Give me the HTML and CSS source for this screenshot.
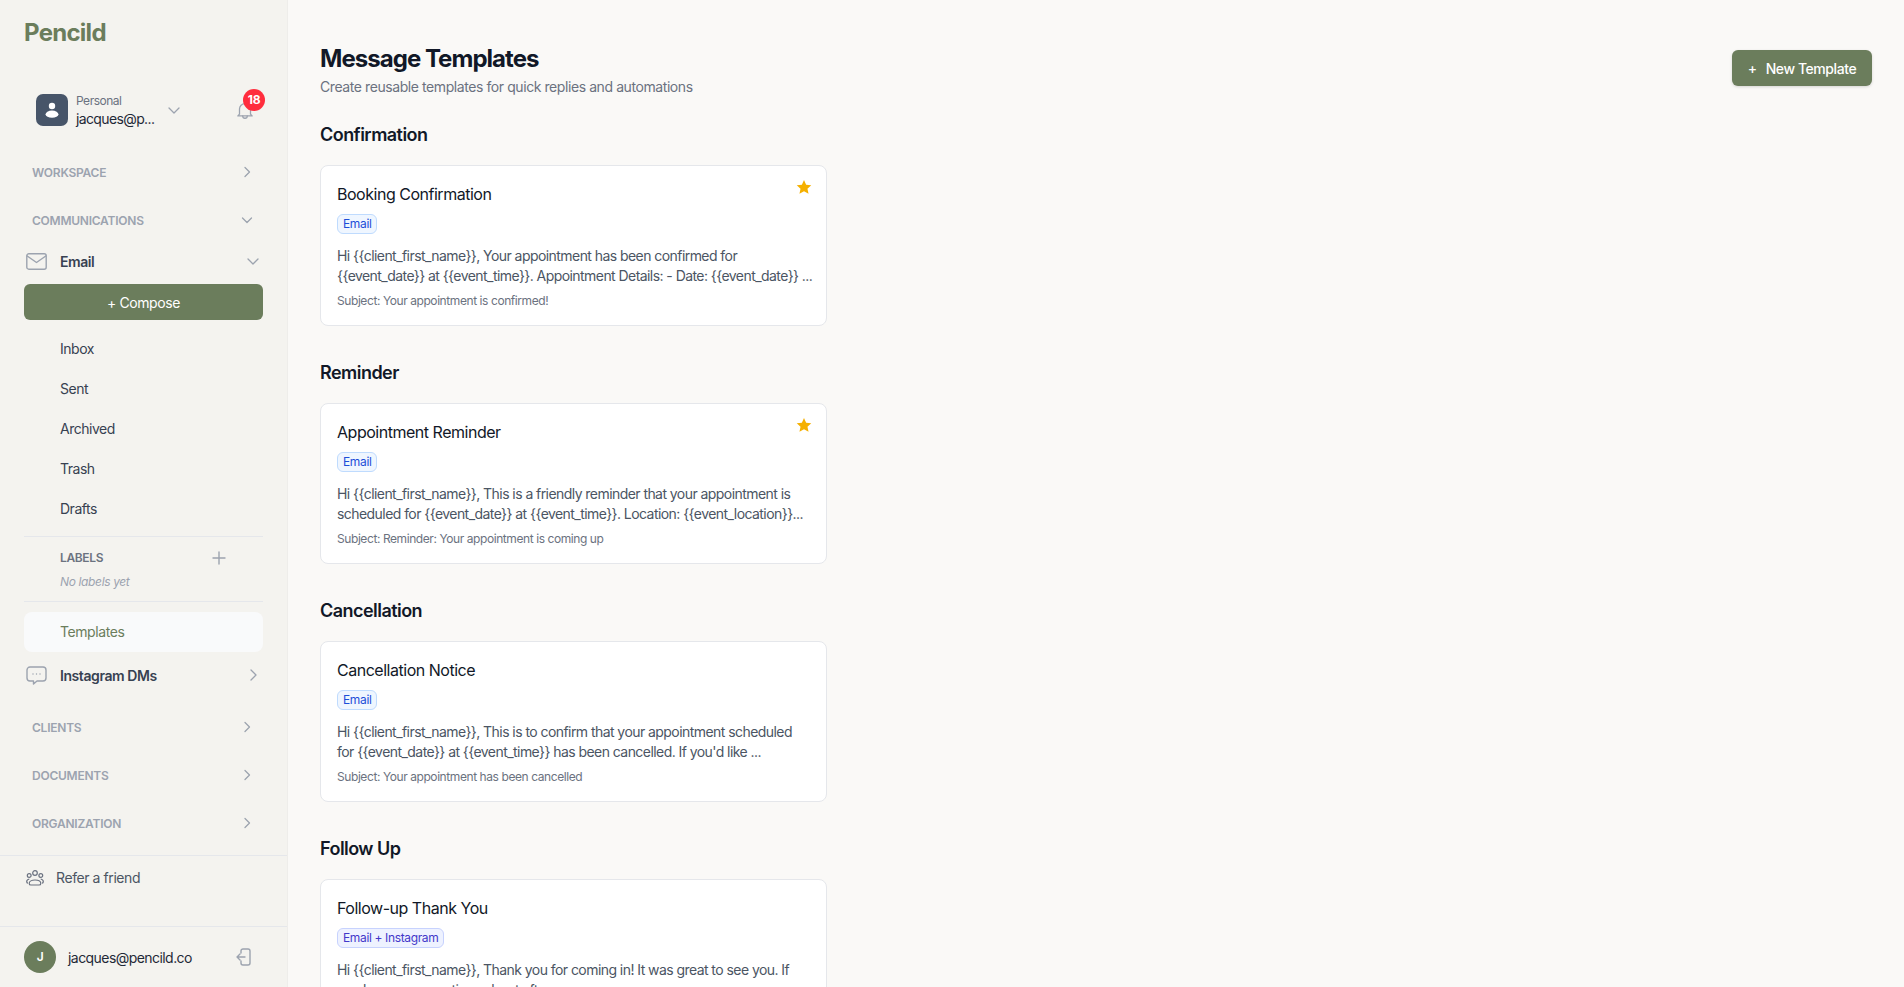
FILE: index.html
```html
<!DOCTYPE html>
<html lang="en">
<head>
    <meta charset="UTF-8">
    <meta name="viewport" content="width=device-width, initial-scale=1.0">
    <title>Message Templates - Pencild</title>
    <link rel="stylesheet" href="styles.css">
</head>
<body>
<div class="app">
    <aside class="sidebar">
        <div class="logo">Pencild</div>

        <div class="account">
            <div class="account-pic">
                <svg width="18" height="18" viewBox="0 0 18 18" fill="#fff"><circle cx="9" cy="5" r="3.2"/><ellipse cx="9" cy="13.2" rx="6.4" ry="3.6"/></svg>
            </div>
            <div class="account-text">
                <div class="account-type">Personal</div>
                <div class="account-mail">jacques@p...</div>
            </div>
            <svg class="chev account-chev" width="16" height="16" viewBox="0 0 16 16"><path d="M3 6l5 5 5-5"/></svg>
            <div class="bell">
                <svg class="line-icon" width="22" height="22" viewBox="0 0 24 24"><path d="M6 16.500V11a6 6 0 0 1 12 0v5.500l1.800 2H4.200z"/><path d="M9.500 18.500a2.500 2.500 0 0 0 5 0"/></svg>
                <span class="badge">18</span>
            </div>
        </div>

        <div class="group-head first">WORKSPACE <svg class="chev" width="14" height="14" viewBox="0 0 14 14"><path d="M5 2.500L9.500 7 5 11.500"/></svg></div>
        <div class="group-head">COMMUNICATIONS <svg class="chev" width="14" height="14" viewBox="0 0 14 14"><path d="M2.500 5L7 9.500 11.500 5"/></svg></div>

        <div class="channel">
            <svg class="line-icon" width="21" height="17" viewBox="0 0 21 17"><rect x="0.800" y="0.800" width="19.400" height="15.400" rx="2"/><path d="M1.200 3L10.500 9.500 19.800 3"/></svg>
            <span>Email</span>
            <svg class="chev channel-chev" width="16" height="16" viewBox="0 0 16 16"><path d="M3 6l5 5 5-5"/></svg>
        </div>
        <button class="compose">+ Compose</button>

        <nav class="mail-links">
            <a>Inbox</a>
            <a>Sent</a>
            <a>Archived</a>
            <a>Trash</a>
            <a>Drafts</a>
        </nav>

        <div class="labels">
            <div class="labels-head">LABELS <svg class="line-icon" width="14" height="14" viewBox="0 0 14 14"><path d="M7 1v12M1 7h12"/></svg></div>
            <div class="labels-empty">No labels yet</div>
        </div>

        <a class="templates-link">Templates</a>

        <div class="channel insta">
            <svg class="line-icon" width="21" height="19" viewBox="0 0 21 19"><path d="M4 1h13a3 3 0 0 1 3 3v8a3 3 0 0 1-3 3h-6l-3.500 3v-3H4a3 3 0 0 1-3-3V4a3 3 0 0 1 3-3z"/><path d="M7 8h.01M10.500 8h.01M14 8h.01"/></svg>
            <span>Instagram DMs</span>
            <svg class="chev channel-chev" width="16" height="16" viewBox="0 0 16 16"><path d="M6 3l5 5-5 5"/></svg>
        </div>

        <div class="group-head clients">CLIENTS <svg class="chev" width="14" height="14" viewBox="0 0 14 14"><path d="M5 2.500L9.500 7 5 11.500"/></svg></div>
        <div class="group-head">DOCUMENTS <svg class="chev" width="14" height="14" viewBox="0 0 14 14"><path d="M5 2.500L9.500 7 5 11.500"/></svg></div>
        <div class="group-head">ORGANIZATION <svg class="chev" width="14" height="14" viewBox="0 0 14 14"><path d="M5 2.500L9.500 7 5 11.500"/></svg></div>

        <div class="refer">
            <svg class="people-icon" width="18" height="16" viewBox="0 0 18 16"><circle cx="9" cy="3" r="2.300"/><circle cx="3.200" cy="5.500" r="1.900"/><circle cx="14.800" cy="5.500" r="1.900"/><path d="M5 15h8c1.300 0 1.800-.800 1.800-1.600 0-2-2.600-3.400-5.800-3.400s-5.800 1.400-5.800 3.400c0 .8.500 1.600 1.800 1.600z"/><path d="M3.300 9C1.800 9.300.700 10.300.700 11.700c0 .7.400 1.300 1.300 1.400M14.700 9c1.500.3 2.600 1.300 2.600 2.700 0 .7-.4 1.300-1.300 1.400"/></svg>
            Refer a friend
        </div>

        <div class="user">
            <div class="user-pic">J</div>
            <div class="user-mail">jacques@pencild.co</div>
            <svg class="line-icon" width="15" height="18" viewBox="0 0 15 18"><path d="M5 5V3a2 2 0 0 1 2-2h5a2 2 0 0 1 2 2v12a2 2 0 0 1-2 2H7a2 2 0 0 1-2-2v-2"/><path d="M9 9H1M4 6L1 9l3 3"/></svg>
        </div>
    </aside>

    <main class="content">
        <div class="top">
            <div>
                <h1>Message Templates</h1>
                <p class="sub">Create reusable templates for quick replies and automations</p>
            </div>
            <button class="new-btn"><span class="plus">+</span>New Template</button>
        </div>

        <section class="cat">
            <h2>Confirmation</h2>
            <div class="grid">
                <div class="card">
                    <svg class="star" width="16" height="16" viewBox="0 0 24 24"><path d="M12 1.500l3.200 7.100 7.700.9-5.700 5.200 1.600 7.600L12 18.400l-6.800 3.900 1.600-7.600L1.100 9.500l7.700-.9z"/></svg>
                    <div class="card-title">Booking Confirmation</div>
                    <div class="tags"><span class="tag">Email</span></div>
                    <p class="card-body">Hi {{client_first_name}}, Your appointment has been confirmed for<br>{{event_date}} at {{event_time}}. Appointment Details: - Date: {{event_date}} ...</p>
                    <p class="card-subject">Subject: Your appointment is confirmed!</p>
                </div>
            </div>
        </section>

        <section class="cat">
            <h2>Reminder</h2>
            <div class="grid">
                <div class="card">
                    <svg class="star" width="16" height="16" viewBox="0 0 24 24"><path d="M12 1.500l3.200 7.100 7.700.9-5.700 5.200 1.600 7.600L12 18.400l-6.800 3.900 1.600-7.600L1.100 9.500l7.700-.9z"/></svg>
                    <div class="card-title">Appointment Reminder</div>
                    <div class="tags"><span class="tag">Email</span></div>
                    <p class="card-body">Hi {{client_first_name}}, This is a friendly reminder that your appointment is<br>scheduled for {{event_date}} at {{event_time}}. Location: {{event_location}}...</p>
                    <p class="card-subject">Subject: Reminder: Your appointment is coming up</p>
                </div>
            </div>
        </section>

        <section class="cat">
            <h2>Cancellation</h2>
            <div class="grid">
                <div class="card">
                    <div class="card-title">Cancellation Notice</div>
                    <div class="tags"><span class="tag">Email</span></div>
                    <p class="card-body">Hi {{client_first_name}}, This is to confirm that your appointment scheduled<br>for {{event_date}} at {{event_time}} has been cancelled. If you'd like ...</p>
                    <p class="card-subject">Subject: Your appointment has been cancelled</p>
                </div>
            </div>
        </section>

        <section class="cat">
            <h2>Follow Up</h2>
            <div class="grid">
                <div class="card">
                    <div class="card-title">Follow-up Thank You</div>
                    <div class="tags"><span class="tag both">Email + Instagram</span></div>
                    <p class="card-body">Hi {{client_first_name}}, Thank you for coming in! It was great to see you. If<br>you have any questions about aftercare ...</p>
                </div>
            </div>
        </section>
    </main>
</div>
</body>
</html>
```

FILE: styles.css
```css
* {
    box-sizing: border-box;
    letter-spacing: -0.03em;
}
html, body {
    margin: 0;
    height: 100%;
    overflow: hidden;
}
body {
    font-family: Inter, "Noto Sans", sans-serif;
    font-size: 14px;
    color: #374151;
    background: #faf9f7;
}
.app {
    display: flex;
    height: 987px;
}

/* sidebar */
.sidebar {
    width: 288px;
    flex: none;
    display: flex;
    flex-direction: column;
    height: 100%;
    background: #f4f3ef;
    border-right: 1px solid #eeedea;
}
.logo {
    font-size: 24px;
    font-weight: 700;
    line-height: 32px;
    color: #6b7d5c;
    padding: 17px 0 0 24px;
}
.account {
    display: flex;
    align-items: center;
    margin-top: 45px;
    padding-left: 36px;
    height: 32px;
}
.account-pic {
    width: 32px;
    height: 32px;
    border-radius: 7px;
    background: #475569;
    display: flex;
    align-items: center;
    justify-content: center;
}
.account-text {
    margin-left: 8px;
    padding-top: 2px;
    width: 80px;
}
.account-type {
    font-size: 12px;
    line-height: 16px;
    letter-spacing: -0.04em;
    color: #6b7280;
}
.account-mail {
    font-size: 14px;
    line-height: 20px;
    letter-spacing: -0.045em;
    color: #1f2937;
}
.account-chev {
    margin-left: 10px;
}
.bell {
    position: relative;
    margin-left: 52px;
    width: 22px;
    height: 22px;
}
.badge {
    position: absolute;
    top: -10px;
    left: 9px;
    width: 22px;
    height: 22px;
    border-radius: 50%;
    background: #ff2d3d;
    color: #fff;
    font-size: 12px;
    font-weight: 700;
    line-height: 22px;
    text-align: center;
}
.line-icon {
    fill: none;
    stroke: #9ca3af;
    stroke-width: 1.4;
    stroke-linecap: round;
    stroke-linejoin: round;
    flex: none;
}
.chev {
    fill: none;
    stroke: #9ca3af;
    stroke-width: 1.3;
    stroke-linecap: round;
    stroke-linejoin: round;
    flex: none;
}
.group-head {
    display: flex;
    align-items: center;
    justify-content: space-between;
    height: 48px;
    padding: 0 33px 0 32px;
    font-size: 12px;
    font-weight: 600;
    letter-spacing: -0.02em;
    color: #9ca3af;
}
.group-head.first {
    margin-top: 22px;
}
.channel {
    display: flex;
    align-items: center;
    height: 32px;
    padding: 0 26px 0 26px;
    font-size: 14px;
    font-weight: 600;
    color: #374151;
    margin-top: 1px;
}
.channel span {
    margin-left: 13px;
}
.channel .channel-chev {
    margin-left: auto;
}
.compose {
    display: block;
    margin: 7px 0 0 24px;
    height: 36px;
    width: 239px;
    flex: none;
    border: 0;
    border-radius: 6px;
    background: #6b7d5c;
    color: #fff;
    font-family: inherit;
    font-size: 14px;
}
.mail-links {
    display: flex;
    flex-direction: column;
    margin-top: 9px;
}
.mail-links a {
    height: 40px;
    line-height: 40px;
    padding-left: 60px;
    letter-spacing: -0.035em;
    color: #374151;
}
.labels {
    margin: 7px 24px 0;
    width: 239px;
    padding: 11px 0 11px;
    border-top: 1px solid #e5e7eb;
    border-bottom: 1px solid #e5e7eb;
}
.labels-head {
    display: flex;
    align-items: center;
    justify-content: space-between;
    padding: 0 37px 0 36px;
    font-size: 12px;
    font-weight: 600;
    line-height: 20px;
    color: #6b7280;
}
.labels-empty {
    padding-left: 36px;
    margin-top: 6px;
    font-size: 12px;
    line-height: 16px;
    font-style: italic;
    color: #9ca3af;
}
.templates-link {
    display: block;
    margin: 10px 24px 0;
    width: 239px;
    height: 40px;
    line-height: 40px;
    padding-left: 36px;
    border-radius: 8px;
    background: #f9fafb;
    color: #6b7d5c;
}
.channel.insta {
    margin-top: 7px;
}
.group-head.clients {
    margin-top: 12px;
}
.refer {
    display: flex;
    align-items: center;
    gap: 12px;
    height: 44px;
    margin-top: 8px;
    padding-left: 26px;
    border-top: 1px solid #e5e7eb;
    color: #4b5563;
}
.people-icon {
    fill: none;
    stroke: #6b7280;
    stroke-width: 1.2;
}
.user {
    display: flex;
    align-items: center;
    margin-top: auto;
    height: 61px;
    padding: 0 36px 0 24px;
    border-top: 1px solid #e5e7eb;
}
.user-pic {
    width: 32px;
    height: 32px;
    border-radius: 50%;
    background: #6b7d5c;
    color: #fff;
    font-size: 12px;
    font-weight: 600;
    line-height: 32px;
    text-align: center;
}
.user-mail {
    margin-left: 12px;
    letter-spacing: -0.04em;
    color: #1f2937;
    flex: 1;
}

/* main */
.content {
    flex: 1;
    padding: 0 32px;
    overflow: hidden;
}
.top {
    display: flex;
    justify-content: space-between;
    align-items: flex-start;
    padding-top: 43px;
}
h1 {
    margin: 0;
    font-size: 24px;
    font-weight: 700;
    line-height: 32px;
    letter-spacing: -0.04em;
    color: #111827;
}
.sub {
    margin: 2px 0 0;
    font-size: 14px;
    line-height: 20px;
    color: #6b7280;
}
.new-btn {
    margin-top: 7px;
    width: 140px;
    height: 36px;
    padding: 0;
    border: 0;
    border-radius: 6px;
    background: #6b7d5c;
    color: #fff;
    font-family: inherit;
    font-size: 14px;
    font-weight: 500;
    box-shadow: 0 1px 3px rgba(0, 0, 0, 0.15);
}
.plus {
    margin-right: 9px;
}
.cat {
    margin-top: 33px;
}
.cat:first-of-type {
    margin-top: 24px;
}
h2 {
    margin: 0;
    font-size: 18px;
    font-weight: 600;
    line-height: 28px;
    color: #111827;
}
.grid {
    display: grid;
    grid-template-columns: repeat(3, minmax(0, 1fr));
    gap: 16px;
    margin-top: 16px;
}
.card {
    position: relative;
    padding: 16px;
    background: #fff;
    border: 1px solid #e5e7eb;
    border-radius: 8px;
}
.star {
    position: absolute;
    top: 13px;
    right: 14px;
    fill: #f5b000;
}
.card-title {
    font-size: 16px;
    line-height: 24px;
    color: #111827;
}
.tags {
    display: flex;
    margin-top: 8px;
}
.tag {
    padding: 0 5px;
    height: 20px;
    font-size: 12px;
    line-height: 18px;
    color: #1d4ed8;
    background: #eff6ff;
    border: 1px solid #bfdbfe;
    border-radius: 6px;
}
.tag.both {
    color: #4338ca;
    background: #eef2ff;
    border-color: #c7d2fe;
}
.card-body {
    margin: 12px 0 0;
    line-height: 20px;
    letter-spacing: -0.04em;
    white-space: nowrap;
    color: #4b5563;
}
.card-subject {
    margin: 7px 0 0;
    font-size: 12px;
    line-height: 16px;
    letter-spacing: -0.035em;
    color: #6b7280;
}
```
